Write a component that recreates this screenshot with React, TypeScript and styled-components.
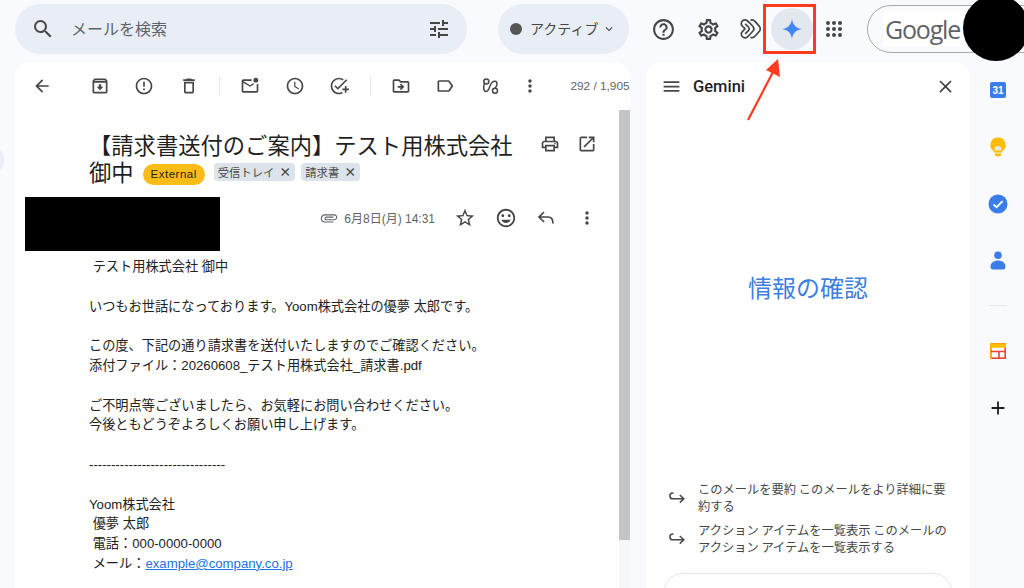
import React from "react";
import styled, { createGlobalStyle } from "styled-components";
import {
  MdAdd,
  MdArrowBack,
  MdAttachFile,
  MdClose,
  MdErrorOutline,
  MdHelpOutline,
  MdKeyboardArrowDown,
  MdMenu,
  MdMoreVert,
  MdOutlineAddTask,
  MdOutlineArchive,
  MdOutlineDelete,
  MdOutlineDriveFileMove,
  MdOutlineInsertEmoticon,
  MdOutlineLabel,
  MdOutlineMarkEmailUnread,
  MdOutlineOpenInNew,
  MdOutlinePrint,
  MdOutlineSettings,
  MdOutlineWatchLater,
  MdSearch,
  MdStarBorder,
  MdTune,
} from "react-icons/md";

const GlobalStyle = createGlobalStyle`
  html, body {
    margin: 0;
    padding: 0;
    background: #f8fafd;
    font-family: "Liberation Sans", "Noto Sans CJK JP", sans-serif;
    color: #1f1f1f;
  }
`;

const bodyLines = [
  "\u00a0テスト用株式会社 御中",
  "",
  "いつもお世話になっております。Yoom株式会社の優夢 太郎です。",
  "",
  "この度、下記の通り請求書を送付いたしますのでご確認ください。",
  "添付ファイル：20260608_テスト用株式会社_請求書.pdf",
  "",
  "ご不明点等ございましたら、お気軽にお問い合わせください。",
  "今後ともどうぞよろしくお願い申し上げます。",
  "",
  "-------------------------------",
  "",
  "Yoom株式会社",
  "\u00a0優夢 太郎",
  "\u00a0電話：000-0000-0000",
];

const appDots = [3, 9, 15];

const HookArrow = () => (
  <svg width="16" height="12" viewBox="0 0 16 12" fill="none" stroke="#444746" strokeWidth="1.5" style={{ flex: "none" }}>
    <path d="M4.5 1 H3.8 A2.9 2.9 0 0 0 3.8 6.8 H14.5 M10.8 3 L14.8 6.8 L10.8 10.6" />
  </svg>
);

const App = () => {
  return (
    <Page>
      <GlobalStyle />
      <TopBar>
        <SearchBox>
          <MdSearch size={24} color="#444746" />
          <SearchText>メールを検索</SearchText>
          <MdTune size={24} color="#444746" />
        </SearchBox>
        <StatusPill>
          <StatusDot />
          <StatusText>アクティブ</StatusText>
          <MdKeyboardArrowDown size={14} color="#444746" />
        </StatusPill>
        <HeadIcon $first>
          <MdHelpOutline size={25} />
        </HeadIcon>
        <HeadIcon $second>
          <MdOutlineSettings size={25} />
        </HeadIcon>
        <HeadIcon>
          <svg width="21" height="22" viewBox="0 0 21 22" fill="none" stroke="#444746" strokeWidth="1.7" strokeLinejoin="round">
            <path d="M1.2 6 C1.2 2.6 4.5 0.8 7 2.5 C8 3.2 8.8 4 9.6 4.8 L13 8.5 C14 9.7 14 11.8 13 13 L9.6 16.8 C8.8 17.8 8 18.6 7 19.3 C4.5 20.8 1.2 19 1.2 16 C1.2 14.8 2 14 2.8 13.2 L4.6 11.4 C5 11 5 10.6 4.6 10.2 L2.8 8.6 C2 7.8 1.2 7 1.2 6 Z" />
            <path d="M5.2 5.8 L8.6 9.2 C9.4 10.2 9.4 11.4 8.6 12.4 L5.2 15.8" />
            <path d="M10.5 2.4 C12.2 1.6 14 2.2 15.2 3.6 L19.4 8.4 C20.4 9.8 20.4 11.8 19.4 13.2 L15.2 18 C14 19.4 12.2 20 10.5 19.2" />
          </svg>
        </HeadIcon>
        <HeadIcon $active>
          <svg width="22" height="22" viewBox="0 0 24 24">
            <path d="M12 1 C12.8 7.5 16.5 11.2 23 12 C16.5 12.8 12.8 16.5 12 23 C11.2 16.5 7.5 12.8 1 12 C7.5 11.2 11.2 7.5 12 1 Z" fill="#4285f4" />
          </svg>
        </HeadIcon>
        <HeadIcon>
          <svg width="18" height="18" viewBox="0 0 18 18" fill="#444746">
            {appDots.map((y) =>
              appDots.map((x) => <circle key={`${x}-${y}`} cx={x} cy={y} r="2" />)
            )}
          </svg>
        </HeadIcon>
        <AccountPill>
          <GoogleMark>Google</GoogleMark>
        </AccountPill>
      </TopBar>

      <Main>
        <MailCard>
          <MailToolbar>
            <ToolIcon $after={13}><MdArrowBack size={20} /></ToolIcon>
            <ToolIcon><MdOutlineArchive size={20} /></ToolIcon>
            <ToolIcon><MdErrorOutline size={20} /></ToolIcon>
            <ToolIcon><MdOutlineDelete size={20} /></ToolIcon>
            <ToolDivider />
            <ToolIcon><MdOutlineMarkEmailUnread size={20} /></ToolIcon>
            <ToolIcon><MdOutlineWatchLater size={20} /></ToolIcon>
            <ToolIcon><MdOutlineAddTask size={20} /></ToolIcon>
            <ToolDivider />
            <ToolIcon><MdOutlineDriveFileMove size={20} /></ToolIcon>
            <ToolIcon><MdOutlineLabel size={20} /></ToolIcon>
            <ToolIcon>
              <svg width="20" height="20" viewBox="0 0 20 20" fill="none" stroke="#444746" strokeWidth="1.5">
                <circle cx="6.3" cy="5.4" r="2.5" />
                <circle cx="15" cy="14.8" r="2.5" />
                <path d="M4.6 7.4 C3 10.5 3.4 15.5 6.2 15.5 C9 15.5 9.2 10.5 11.2 7.6 C12.6 5.4 15.6 4.2 16.6 6.2 C17.6 8.2 16.4 10.6 15 12.3" />
              </svg>
            </ToolIcon>
            <ToolIcon $narrow><MdMoreVert size={20} /></ToolIcon>
            <PageCount>292 / 1,905</PageCount>
          </MailToolbar>

          <MailRow>
            <MailContent>
              <SubjectRow>
                <Subject>
                  【請求書送付のご案内】テスト用株式会社 御中
                  <ExternalTag>External</ExternalTag>
                  <LabelChip>受信トレイ<ChipClose>×</ChipClose></LabelChip>
                  <LabelChip>請求書<ChipClose>×</ChipClose></LabelChip>
                </Subject>
                <SubjectActions>
                  <MdOutlinePrint size={20} />
                  <MdOutlineOpenInNew size={20} />
                </SubjectActions>
              </SubjectRow>

              <MetaRow>
                <ClipIcon><MdAttachFile size={18} color="#5f6368" /></ClipIcon>
                <DateText>6月8日(月) 14:31</DateText>
                <MetaIcon><MdStarBorder size={22} /></MetaIcon>
                <MetaIcon><MdOutlineInsertEmoticon size={22} /></MetaIcon>
                <MetaIcon>
                  <svg width="20" height="20" viewBox="0 0 20 20" fill="none" stroke="#444746" strokeWidth="1.7">
                    <path d="M8 4 L3 9 L8 14 M3 9 H12 C15 9 17 11 17 15.5" />
                  </svg>
                </MetaIcon>
                <MetaIcon><MdMoreVert size={20} /></MetaIcon>
              </MetaRow>

              <MailBody>
                {bodyLines.map((line, i) => (
                  <BodyLine key={i}>{line || "\u00a0"}</BodyLine>
                ))}
                <BodyLine>
                  {"\u00a0メール："}
                  <MailLink>example@company.co.jp</MailLink>
                </BodyLine>
              </MailBody>
            </MailContent>
            <ScrollTrack>
              <ScrollThumb />
            </ScrollTrack>
          </MailRow>
        </MailCard>

        <GeminiCard>
          <GeminiHeader>
            <MdMenu size={21} color="#444746" />
            <GeminiTitle>Gemini</GeminiTitle>
            <MdClose size={21} color="#444746" />
          </GeminiHeader>
          <GeminiHeading>情報の確認</GeminiHeading>
          <Suggestions>
            <Suggestion>
              <HookArrow />
              <SuggestionText>このメールを要約 このメールをより詳細に要約する</SuggestionText>
            </Suggestion>
            <Suggestion>
              <HookArrow />
              <SuggestionText>アクション アイテムを一覧表示 このメールのアクション アイテムを一覧表示する</SuggestionText>
            </Suggestion>
          </Suggestions>
          <PromptBox />
        </GeminiCard>

        <Rail>
          <RailItem>
            <CalendarTile>31</CalendarTile>
          </RailItem>
          <RailItem>
            <svg width="18" height="20" viewBox="0 0 18 20">
              <path d="M9 0.5 A7.5 7.5 0 0 1 13 14.4 V15.5 H5 V14.4 A7.5 7.5 0 0 1 9 0.5 Z" fill="#fbbc04" />
              <path d="M5.5 12 a3.5 3 0 0 1 7 0 v1.5 h-7 Z" fill="#e8e6df" />
              <path d="M5.5 16.5 H12.5 A3.5 3 0 0 1 5.5 16.5 Z" fill="#fbbc04" />
            </svg>
          </RailItem>
          <RailItem>
            <svg width="20" height="20" viewBox="0 0 20 20">
              <circle cx="10" cy="10" r="9.5" fill="#3b7de8" />
              <path d="M5.5 10.5 L8.6 13.2 L14.6 7.2" fill="none" stroke="#fff" strokeWidth="1.8" />
            </svg>
          </RailItem>
          <RailItem>
            <svg width="16" height="19" viewBox="0 0 16 19">
              <circle cx="8" cy="4.2" r="3.8" fill="#3b7de8" />
              <path d="M0.5 15.5 C0.5 11.5 4.5 9.5 8 9.5 C11.5 9.5 15.5 11.5 15.5 15.5 C15.5 17.5 14.5 18.5 13 18.5 H3 C1.5 18.5 0.5 17.5 0.5 15.5 Z" fill="#3b7de8" />
            </svg>
          </RailItem>
          <RailDivider />
          <RailItem $gapTop={16}>
            <svg width="16" height="16" viewBox="0 0 16 16" fill="none" strokeWidth="1.6">
              <rect x="0.8" y="0.8" width="14.4" height="14.4" fill="#fff" stroke="#ea4335" />
              <path d="M0 1 H16 V4 H0 Z M1 0 V16" fill="#fbbc04" stroke="#fbbc04" />
              <path d="M1 8.5 H15 M9 8.5 V15" stroke="#ea4335" />
            </svg>
          </RailItem>
          <RailItem>
            <MdAdd size={22} color="#1f1f1f" />
          </RailItem>
        </Rail>
      </Main>

      <EdgeTab />
      <RedactedName />
      <RedactedAvatar />
      <CalloutBox />
      <CalloutArrow width="50" height="70" viewBox="0 0 50 70">
        <path d="M5 62 L30 14" stroke="#ff3b1f" strokeWidth="2.2" fill="none" />
        <path d="M35 1 L37 19 L23 12 Z" fill="#ff3b1f" />
      </CalloutArrow>
    </Page>
  );
};

export default App;

const Page = styled.div`
  position: relative;
  width: 1024px;
  height: 588px;
  overflow: hidden;
  background: #f8fafd;
`;

const TopBar = styled.div`
  display: flex;
  align-items: center;
  height: 50px;
  padding: 4px 0 8px 15px;
`;

const SearchBox = styled.div`
  display: flex;
  align-items: center;
  flex: none;
  width: 452px;
  height: 50px;
  padding: 0 16px;
  box-sizing: border-box;
  background: #e9eef6;
  border-radius: 25px;
`;

const SearchText = styled.div`
  flex: 1;
  margin-left: 16px;
  padding-bottom: 2px;
  font-size: 16px;
  color: #5f6368;
  font-family: "Noto Sans CJK JP", sans-serif;
`;

const StatusPill = styled.div`
  display: flex;
  align-items: center;
  flex: none;
  width: 131px;
  height: 50px;
  margin-left: 31px;
  padding-left: 12px;
  box-sizing: border-box;
  background: #e9eef6;
  border-radius: 25px;
`;

const StatusDot = styled.div`
  width: 12px;
  height: 12px;
  border-radius: 50%;
  background: #555;
`;

const StatusText = styled.div`
  margin: 0 4px 0 8px;
  padding-bottom: 2px;
  font-size: 14px;
  color: #444746;
  font-family: "Noto Sans CJK JP", sans-serif;
`;

const HeadIcon = styled.div<{ $first?: boolean; $second?: boolean; $active?: boolean }>`
  display: flex;
  align-items: center;
  justify-content: center;
  flex: none;
  width: 42px;
  height: 42px;
  margin-left: ${(p) => (p.$first ? 13 : p.$second ? 3 : 0)}px;
  border-radius: 50%;
  color: #444746;
  background: ${(p) => (p.$active ? "#e3e8ef" : "transparent")};
`;

const AccountPill = styled.div`
  display: flex;
  align-items: center;
  flex: none;
  width: 200px;
  height: 48px;
  margin-left: 12px;
  padding-left: 15px;
  box-sizing: border-box;
  border: 1px solid #a8abaf;
  border-radius: 25px;
`;

const GoogleMark = styled.div`
  padding: 0 2px;
  background: #fff;
  font-family: "Open Sans", sans-serif;
  font-size: 25px;
  letter-spacing: -1.2px;
  color: #5f6368;
`;

const Main = styled.div`
  display: flex;
  height: 526px;
  padding-left: 15px;
`;

const MailCard = styled.div`
  display: flex;
  flex-direction: column;
  flex: none;
  width: 615px;
  background: #fff;
  border-radius: 16px 16px 0 0;
  overflow: hidden;
`;

const MailToolbar = styled.div`
  display: flex;
  align-items: center;
  flex: none;
  height: 48px;
  padding-left: 5px;
  color: #444746;
`;

const ToolIcon = styled.div<{ $after?: number; $narrow?: boolean }>`
  display: flex;
  align-items: center;
  justify-content: center;
  flex: none;
  width: 44.5px;
  margin-right: ${(p) => p.$after ?? 0}px;
  margin-left: ${(p) => (p.$narrow ? -4 : 0)}px;
`;

const ToolDivider = styled.div`
  flex: none;
  width: 1px;
  height: 20px;
  margin: 0 8px;
  background: #e3e8ef;
`;

const PageCount = styled.div`
  flex: none;
  margin-left: 18px;
  font-size: 11.8px;
  color: #5f6368;
  white-space: nowrap;
`;

const MailRow = styled.div`
  display: flex;
  flex: 1;
  min-height: 0;
`;

const MailContent = styled.div`
  flex: 1;
  min-width: 0;
`;

const SubjectRow = styled.div`
  display: flex;
  align-items: flex-start;
  height: 56px;
  padding: 21px 0 0 74px;
`;

const Subject = styled.div`
  flex: none;
  width: 440px;
  font-size: 22.3px;
  line-height: 27px;
  color: #1f1f1f;
  font-family: "Noto Sans CJK JP", sans-serif;
`;

const ExternalTag = styled.span`
  display: inline-block;
  height: 21px;
  margin-left: 9px;
  padding: 0 8px;
  border-radius: 11px;
  background: #fbbc15;
  font-size: 11.5px;
  letter-spacing: 0.5px;
  line-height: 21px;
  vertical-align: 3px;
  color: #222;
  font-family: "Liberation Sans", sans-serif;
`;

const LabelChip = styled.span`
  display: inline-block;
  height: 18px;
  margin-left: 9px;
  padding: 0 4px;
  border-radius: 4px;
  background: #dde3ea;
  font-size: 11.3px;
  line-height: 18px;
  vertical-align: 4px;
  color: #444746;

  & + & {
    margin-left: 6px;
  }
`;

const ChipClose = styled.span`
  margin-left: 5px;
  font-size: 12px;
  font-weight: 700;
`;

const SubjectActions = styled.div`
  display: flex;
  gap: 17px;
  margin: 3px 0 0 11px;
  color: #444746;
`;

const MetaRow = styled.div`
  display: flex;
  align-items: center;
  justify-content: flex-end;
  height: 41px;
  margin: 10px 0 0;
  padding-right: 12px;
  color: #444746;
`;

const ClipIcon = styled.div`
  display: flex;
  margin-right: 6px;
  transform: rotate(90deg);
`;

const DateText = styled.div`
  margin-right: 10px;
  font-size: 12px;
  color: #5f6368;
  white-space: nowrap;
`;

const MetaIcon = styled.div`
  display: flex;
  justify-content: center;
  flex: none;
  width: 40.5px;
`;

const MailBody = styled.div`
  padding-left: 74px;
  margin-top: 19px;
  font-size: 13.2px;
  line-height: 19.8px;
  color: #222;
`;

const BodyLine = styled.div`
  white-space: nowrap;
`;

const MailLink = styled.span`
  color: #1a73e8;
  text-decoration: underline;
`;

const ScrollTrack = styled.div`
  flex: none;
  width: 11px;
  background: #f6f7f8;
`;

const ScrollThumb = styled.div`
  height: 430px;
  background: #c4c5c6;
`;

const GeminiCard = styled.div`
  display: flex;
  flex-direction: column;
  flex: none;
  width: 324px;
  margin-left: 16px;
  background: #fff;
  border-radius: 16px 16px 0 0;
  overflow: hidden;
`;

const GeminiHeader = styled.div`
  display: flex;
  align-items: center;
  flex: none;
  height: 48px;
  padding: 0 14px 0 15px;
`;

const GeminiTitle = styled.div`
  flex: 1;
  margin-left: 11px;
  font-size: 16.5px;
  font-weight: 500;
  font-family: "Roboto", sans-serif;
  color: #1f1f1f;
`;

const GeminiHeading = styled.div`
  flex: none;
  margin-top: 160px;
  font-size: 24px;
  line-height: 34px;
  text-align: center;
  color: #3f7fe0;
  font-family: "Noto Sans CJK JP", sans-serif;
`;

const Suggestions = styled.div`
  display: flex;
  flex-direction: column;
  gap: 7px;
  margin-top: 177px;
  padding-left: 23px;
`;

const Suggestion = styled.div`
  display: flex;
  align-items: center;
  gap: 13px;
`;

const SuggestionText = styled.div`
  width: 252px;
  font-size: 12.25px;
  line-height: 17px;
  color: #444746;
  font-family: "Noto Sans CJK JP", sans-serif;
`;

const PromptBox = styled.div`
  flex: none;
  height: 70px;
  margin: 17px 17px 0;
  border: 1px solid #e3e8f2;
  border-radius: 20px;
`;

const Rail = styled.div`
  display: flex;
  flex-direction: column;
  align-items: center;
  flex: none;
  width: 54px;
  padding-left: 1px;
  margin-top: -1px;
`;

const RailItem = styled.div<{ $gapTop?: number }>`
  display: flex;
  align-items: center;
  justify-content: center;
  flex: none;
  width: 100%;
  height: 57px;
  margin-top: ${(p) => p.$gapTop ?? 0}px;
`;

const RailDivider = styled.div`
  flex: none;
  width: 18px;
  height: 1px;
  margin-top: 16px;
  background: #e6e9ee;
`;

const CalendarTile = styled.div`
  width: 16px;
  height: 16px;
  border-radius: 2px;
  background: #3b7de8;
  color: #fff;
  font-size: 10px;
  font-weight: 700;
  line-height: 17px;
  text-align: center;
`;

const EdgeTab = styled.div`
  position: absolute;
  left: -6px;
  top: 150px;
  width: 10px;
  height: 20px;
  border-radius: 50%;
  background: #e9eef6;
`;

const RedactedName = styled.div`
  position: absolute;
  left: 25px;
  top: 197px;
  width: 195px;
  height: 54px;
  background: #000;
`;

const RedactedAvatar = styled.div`
  position: absolute;
  left: 963px;
  top: -5px;
  width: 66px;
  height: 66px;
  border-radius: 50%;
  background: #000;
`;

const CalloutBox = styled.div`
  position: absolute;
  left: 763px;
  top: 4px;
  width: 53px;
  height: 50px;
  box-sizing: border-box;
  border: 3px solid #ff3b1f;
`;

const CalloutArrow = styled.svg`
  position: absolute;
  left: 743px;
  top: 58px;
`;
